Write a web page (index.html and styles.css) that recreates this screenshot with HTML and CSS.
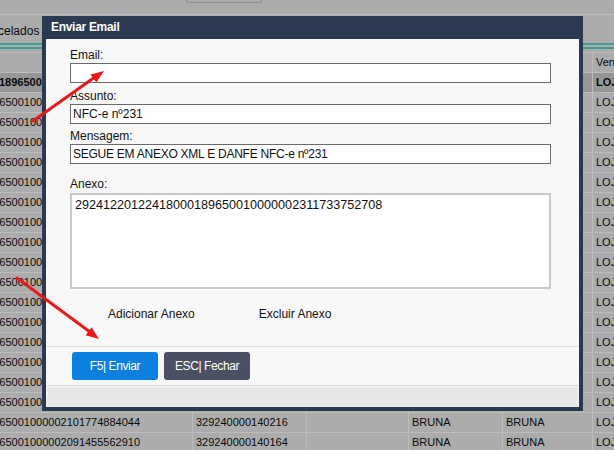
FILE: index.html
```html
<!DOCTYPE html>
<html lang="pt-BR">
<head>
<meta charset="utf-8">
<title>Enviar Email</title>
<link rel="stylesheet" href="styles.css">
</head>
<body>
<div class="page">
  <div class="topbar"><div class="topbtn"></div></div>
  <div class="tabs"><span class="tab">Cancelados</span></div>
  <div class="tabline"></div>
  <div class="grid">
    <div class="row head">
      <div class="cell c1"></div><div class="cell"></div><div class="cell"></div><div class="cell"></div><div class="cell"></div><div class="cell">Vendedor</div>
    </div>
    <div class="row sel"><div class="cell c1"><span class="key keysel">2924122012241800018965001000002311733752708</span></div><div class="cell"></div><div class="cell"></div><div class="cell"></div><div class="cell"></div><div class="cell">LOJA</div></div>
    <div class="row"><div class="cell c1"><span class="key">2924122012241800018965001000002301776153018</span></div><div class="cell"></div><div class="cell"></div><div class="cell"></div><div class="cell"></div><div class="cell">LOJA</div></div>
    <div class="row"><div class="cell c1"><span class="key">2924122012241800018965001000002291812440236</span></div><div class="cell"></div><div class="cell"></div><div class="cell"></div><div class="cell"></div><div class="cell">LOJA</div></div>
    <div class="row"><div class="cell c1"><span class="key">2924122012241800018965001000002281305521744</span></div><div class="cell"></div><div class="cell"></div><div class="cell"></div><div class="cell"></div><div class="cell">LOJA</div></div>
    <div class="row"><div class="cell c1"><span class="key">2924122012241800018965001000002271440089912</span></div><div class="cell"></div><div class="cell"></div><div class="cell"></div><div class="cell"></div><div class="cell">LOJA</div></div>
    <div class="row"><div class="cell c1"><span class="key">2924122012241800018965001000002261987734105</span></div><div class="cell"></div><div class="cell"></div><div class="cell"></div><div class="cell"></div><div class="cell">LOJA</div></div>
    <div class="row"><div class="cell c1"><span class="key">2924122012241800018965001000002251102938476</span></div><div class="cell"></div><div class="cell"></div><div class="cell"></div><div class="cell"></div><div class="cell">LOJA</div></div>
    <div class="row"><div class="cell c1"><span class="key">2924122012241800018965001000002241655370281</span></div><div class="cell"></div><div class="cell"></div><div class="cell"></div><div class="cell"></div><div class="cell">LOJA</div></div>
    <div class="row"><div class="cell c1"><span class="key">2924122012241800018965001000002231774020593</span></div><div class="cell"></div><div class="cell"></div><div class="cell"></div><div class="cell"></div><div class="cell">LOJA</div></div>
    <div class="row"><div class="cell c1"><span class="key">2924122012241800018965001000002221389564017</span></div><div class="cell"></div><div class="cell"></div><div class="cell"></div><div class="cell"></div><div class="cell">LOJA</div></div>
    <div class="row"><div class="cell c1"><span class="key">2924122012241800018965001000002211520487730</span></div><div class="cell"></div><div class="cell"></div><div class="cell"></div><div class="cell"></div><div class="cell">LOJA</div></div>
    <div class="row"><div class="cell c1"><span class="key">2924122012241800018965001000002201064319958</span></div><div class="cell"></div><div class="cell"></div><div class="cell"></div><div class="cell"></div><div class="cell">LOJA</div></div>
    <div class="row"><div class="cell c1"><span class="key">2924122012241800018965001000002191847702364</span></div><div class="cell"></div><div class="cell"></div><div class="cell"></div><div class="cell"></div><div class="cell">LOJA</div></div>
    <div class="row"><div class="cell c1"><span class="key">2924122012241800018965001000002181298855421</span></div><div class="cell"></div><div class="cell"></div><div class="cell"></div><div class="cell"></div><div class="cell">LOJA</div></div>
    <div class="row"><div class="cell c1"><span class="key">2924122012241800018965001000002171630094187</span></div><div class="cell"></div><div class="cell"></div><div class="cell"></div><div class="cell"></div><div class="cell">LOJA</div></div>
    <div class="row"><div class="cell c1"><span class="key">2924122012241800018965001000002161954123870</span></div><div class="cell"></div><div class="cell"></div><div class="cell"></div><div class="cell"></div><div class="cell">LOJA</div></div>
    <div class="row"><div class="cell c1"><span class="key">2924122012241800018965001000002111388026657</span></div><div class="cell"></div><div class="cell"></div><div class="cell"></div><div class="cell"></div><div class="cell">LOJA</div></div>
    <div class="row"><div class="cell c1"><span class="key">2924122012241800018965001000002101774884044</span></div><div class="cell">329240000140216</div><div class="cell"></div><div class="cell">BRUNA</div><div class="cell">BRUNA</div><div class="cell">LOJA</div></div>
    <div class="row"><div class="cell c1"><span class="key">2924122012241800018965001000002091455562910</span></div><div class="cell">329240000140164</div><div class="cell"></div><div class="cell">BRUNA</div><div class="cell">BRUNA</div><div class="cell">LOJA</div></div>
  </div>
</div>

<div class="modal">
  <div class="modal-title">Enviar Email</div>
  <div class="modal-body">
    <div class="modal-main">
      <div class="field f-email">
        <label class="lbl">Email:</label>
        <input class="inp" type="text" value="">
      </div>
      <div class="field f-assunto">
        <label class="lbl">Assunto:</label>
        <input class="inp" type="text" value="NFC-e nº231">
      </div>
      <div class="field f-msg">
        <label class="lbl">Mensagem:</label>
        <input class="inp inp-msg" type="text" value="SEGUE EM ANEXO XML E DANFE NFC-e nº231">
      </div>
      <div class="field f-anexo">
        <label class="lbl">Anexo:</label>
        <textarea class="area">29241220122418000189650010000002311733752708</textarea>
      </div>
      <div class="attach-actions">
        <span class="link-btn">Adicionar Anexo</span>
        <span class="link-btn">Excluir Anexo</span>
      </div>
    </div>
    <div class="modal-buttons">
      <button class="btn btn-primary">F5| Enviar</button>
      <button class="btn btn-dark">ESC| Fechar</button>
    </div>
    <div class="modal-status"></div>
  </div>
</div>

<svg class="arrows" width="614" height="450" viewBox="0 0 614 450">
  <line x1="33" y1="121" x2="95" y2="77" stroke="#e8191b" stroke-width="3" stroke-linecap="round"/>
  <polygon points="104,71 96.3,82.6 90.5,74.4" fill="#e8191b"/>
  <line x1="17" y1="278" x2="90" y2="332" stroke="#e8191b" stroke-width="3" stroke-linecap="round"/>
  <polygon points="99,339 85.6,335.2 91.6,327.2" fill="#e8191b"/>
</svg>
</body>
</html>
```

FILE: styles.css
```css
html, body {
  margin: 0;
  padding: 0;
}
body {
  width: 614px;
  height: 450px;
  overflow: hidden;
  position: relative;
  background: #acacac;
  font-family: "Liberation Sans", Arial, sans-serif;
  color: #0a0a0a;
}
.page {
  width: 614px;
  height: 450px;
  overflow: hidden;
  background: #acacac;
}
.topbar {
  height: 14px;
  border-bottom: 1px solid #bababa;
  background: #ababab;
}
.topbtn {
  margin-left: 186px;
  width: 74px;
  height: 2px;
  border: 1px solid #8e8e8e;
  border-top: none;
  border-radius: 0 0 5px 5px;
}
.tabs {
  height: 27px;
  overflow: hidden;
  white-space: nowrap;
}
.tab {
  display: inline-block;
  margin-left: -24px;
  font-size: 12px;
  line-height: 14px;
  padding-top: 9px;
}
.tabline {
  height: 2px;
  margin-top: 1px;
  border-top: 2px solid #3f9c92;
  border-bottom: 2px solid #3f9c92;
}
.grid {
  margin-top: 3px;
  font-size: 11px;
}
.row {
  display: grid;
  grid-template-columns: 193px 114px 102px 94px 90px 60px;
  height: 20px;
  box-sizing: border-box;
  border-top: 1px solid #bcbcbc;
  white-space: nowrap;
}
.row.sel {
  background: #979797;
  font-weight: bold;
}
.cell {
  overflow: hidden;
  border-right: 1px solid #bcbcbc;
  padding-left: 3px;
  line-height: 19px;
}
.cell.c1 {
  padding-left: 0;
}
.key {
  display: inline-block;
  margin-left: -123px;
}
.key.keysel {
  margin-left: -105px;
}

/* modal */
.modal {
  position: absolute;
  left: 42px;
  top: 16px;
  width: 541px;
  height: 395px;
  box-sizing: border-box;
  padding: 0 4px 4px;
  background: #2c3a51;
  display: flex;
  flex-direction: column;
}
.modal-title {
  height: 23px;
  line-height: 23px;
  padding-left: 5px;
  color: #ffffff;
  font-weight: bold;
  font-size: 12px;
  letter-spacing: -0.3px;
}
.modal-body {
  flex: 1;
  background: #f8f8f8;
  display: flex;
  flex-direction: column;
}
.modal-main {
  flex: 1;
  padding: 9px 28px 0 24px;
}
.field {
  display: flex;
  flex-direction: column;
  margin-bottom: 6px;
}
.f-assunto {
  margin-bottom: 5px;
}
.f-anexo {
  margin-top: 13px;
}
.lbl {
  font-size: 12px;
  line-height: 14px;
  margin-bottom: 1px;
  color: #111;
}
.f-anexo .lbl {
  margin-bottom: 2px;
}
.inp {
  height: 20px;
  box-sizing: border-box;
  border: 1px solid #6a6a6a;
  background: #ffffff;
  padding: 0 2px;
  margin: 0;
  font-family: "Liberation Sans", Arial, sans-serif;
  font-size: 12px;
  color: #111;
  outline: none;
}
.inp-msg {
  letter-spacing: -0.25px;
}
.area {
  height: 96px;
  box-sizing: border-box;
  border: 2px solid #c6c9cd;
  background: #ffffff;
  padding: 3px 3px;
  margin: 0;
  resize: none;
  font-family: "Liberation Sans", Arial, sans-serif;
  font-size: 12.6px;
  line-height: 15px;
  color: #111;
  outline: none;
}
.attach-actions {
  display: flex;
  gap: 64px;
  padding-left: 38px;
  margin-top: 18px;
}
.link-btn {
  font-size: 12px;
  line-height: 14px;
  color: #111;
}
.modal-buttons {
  display: flex;
  gap: 6px;
  padding: 5px 0 5px 26px;
  border-top: 1px solid #dedede;
  border-bottom: 1px solid #dadada;
}
.btn {
  width: 86px;
  height: 28px;
  border: none;
  border-radius: 3px;
  color: #ffffff;
  font-family: "Liberation Sans", Arial, sans-serif;
  font-size: 12px;
  letter-spacing: -0.4px;
  padding: 0;
}
.btn-primary {
  background: #0b80de;
}
.btn-dark {
  background: #4b5064;
}
.modal-status {
  height: 20px;
  margin: 1px 1px 0;
  background: #e7e8ea;
  border-radius: 2px 2px 0 0;
}
.arrows {
  position: absolute;
  left: 0;
  top: 0;
  pointer-events: none;
}
```
